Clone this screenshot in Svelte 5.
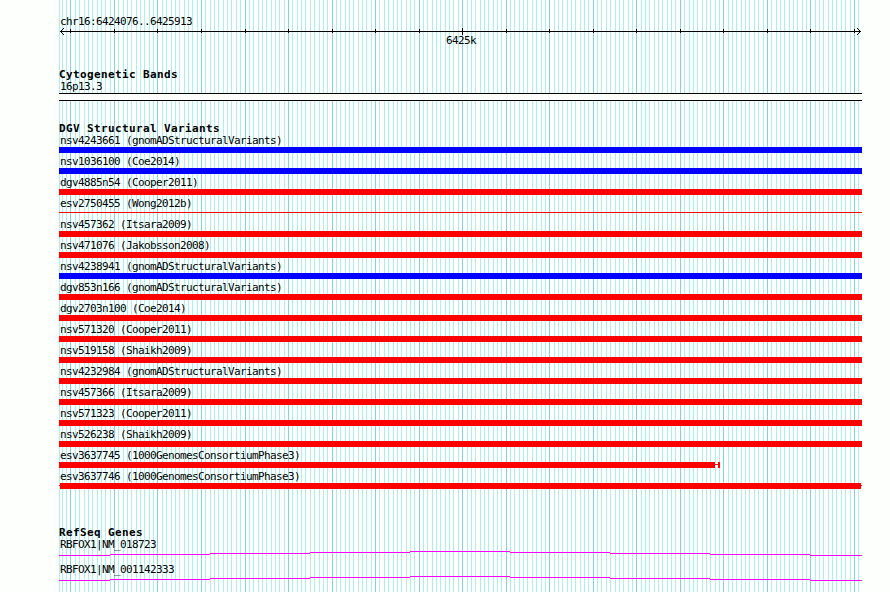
<script lang="ts">
	const start = 6424076;
	const end = 6425913;
	const scale = 800 / (end - start + 1);

	function toX(base: number): number {
		return Math.round(1 + (base - start) * scale);
	}

	const lines = [{ base: start, x: 0, major: false }];
	for (let base = 6424080; base < end; base += 10) {
		lines.push({ base, x: toX(base), major: base % 100 === 0 });
	}
	const ticks = lines.filter((line) => line.major);

	const variants = [
		{ id: 'nsv4243661', study: 'gnomADStructuralVariants', kind: 'loss-gain' },
		{ id: 'nsv1036100', study: 'Coe2014', kind: 'loss-gain' },
		{ id: 'dgv4885n54', study: 'Cooper2011', kind: 'loss' },
		{ id: 'esv2750455', study: 'Wong2012b', kind: 'thin' },
		{ id: 'nsv457362', study: 'Itsara2009', kind: 'loss' },
		{ id: 'nsv471076', study: 'Jakobsson2008', kind: 'loss' },
		{ id: 'nsv4238941', study: 'gnomADStructuralVariants', kind: 'loss-gain' },
		{ id: 'dgv853n166', study: 'gnomADStructuralVariants', kind: 'loss' },
		{ id: 'dgv2703n100', study: 'Coe2014', kind: 'loss' },
		{ id: 'nsv571320', study: 'Cooper2011', kind: 'loss' },
		{ id: 'nsv519158', study: 'Shaikh2009', kind: 'loss' },
		{ id: 'nsv4232984', study: 'gnomADStructuralVariants', kind: 'loss' },
		{ id: 'nsv457366', study: 'Itsara2009', kind: 'loss' },
		{ id: 'nsv571323', study: 'Cooper2011', kind: 'loss' },
		{ id: 'nsv526238', study: 'Shaikh2009', kind: 'loss' },
		{ id: 'esv3637745', study: '1000GenomesConsortiumPhase3', kind: 'ends-inside' },
		{ id: 'esv3637746', study: '1000GenomesConsortiumPhase3', kind: 'whole' }
	];

	const genes = ['RBFOX1|NM_018723', 'RBFOX1|NM_001142333'];

	// the intron line rises to the middle of the panel, one pixel per step
	const intron = [
		[0, 51, 5],
		[51, 151, 4],
		[151, 251, 3],
		[251, 351, 2],
		[351, 451, 1],
		[451, 551, 2],
		[551, 651, 3],
		[651, 751, 4],
		[751, 803, 5]
	];
</script>

<main class="panel">
	<svg class="grid" width="803" height="592" aria-hidden="true">
		{#each lines as line}
			<rect class:major={line.major} x={line.x} y="0" width="1" height="592" />
		{/each}
	</svg>

	<div class="tracks">
		<header class="ruler">
			<div class="label">chr16:6424076..6425913</div>
			<svg class="scale" width="803" height="9" aria-hidden="true">
				<rect x="1" y="4" width="801" height="1" />
				{#each ticks as tick}
					{#if tick.base % 1000 === 0}
						<rect x={tick.x} y="1" width="1" height="7" />
					{:else}
						<rect x={tick.x} y="2" width="1" height="4" />
					{/if}
				{/each}
				<path d="M4 1h1v1H4zM3 2h1v1H3zM2 3h1v1H2zM2 5h1v1H2zM3 6h1v1H3zM4 7h1v1H4z" />
				<path d="M798 1h1v1h-1zM799 2h1v1h-1zM800 3h1v1h-1zM800 5h1v1h-1zM799 6h1v1h-1zM798 7h1v1h-1z" />
			</svg>
			<div class="label center">6425k</div>
		</header>

		<section class="cytobands">
			<h2>Cytogenetic Bands</h2>
			<div class="label">16p13.3</div>
			<div class="band"></div>
		</section>

		<section class="variants">
			<h2>DGV Structural Variants</h2>
			{#each variants as variant}
				<div class="variant">
					<div class="label">{variant.id} ({variant.study})</div>
					<div class="bar {variant.kind}"></div>
				</div>
			{/each}
		</section>

		<section class="genes">
			<h2>RefSeq Genes</h2>
			{#each genes as gene}
				<div class="gene">
					<div class="label">{gene}</div>
					<svg width="803" height="8" aria-hidden="true">
						{#each intron as [from, to, y]}
							<rect x={from} {y} width={to - from} height="1" />
						{/each}
					</svg>
				</div>
			{/each}
		</section>
	</div>
</main>

<style>
	:global(body) {
		background: #fcfffc;
	}

	.panel {
		display: grid;
		width: 803px;
		height: 592px;
		margin-left: 59px;
		overflow: hidden;
		color: #000;
		font-family: 'DejaVu Sans Mono', monospace;
		font-size: 11px;
	}

	.grid,
	.tracks {
		grid-area: 1 / 1;
	}

	svg {
		display: block;
		shape-rendering: crispEdges;
	}

	.grid {
		fill: #afeeee;
	}

	.grid .major {
		fill: #87ceeb;
	}

	.tracks {
		z-index: 1;
		min-width: 0;
	}

	.label {
		height: 12px;
		padding-left: 1px;
		letter-spacing: -0.622px;
		line-height: 14px;
		white-space: pre;
	}

	h2 {
		height: 12px;
		margin: 0;
		font-size: 11px;
		font-weight: 700;
		letter-spacing: 0.378px;
		line-height: 14px;
	}

	.ruler {
		height: 68px;
		padding-top: 15px;
		box-sizing: border-box;
	}

	.center {
		padding-left: 387px;
		margin-top: -2px;
	}

	.cytobands {
		height: 54px;
	}

	.band {
		height: 6px;
		margin-top: 1px;
		border-top: 1px solid #000;
		border-bottom: 1px solid #000;
		background: #fcfffc;
	}

	.variants {
		height: 404px;
	}

	.variant {
		height: 21px;
	}

	.bar {
		height: 6px;
		margin-top: 1px;
		background: #f00;
	}

	.bar.loss-gain {
		background: #00f;
	}

	.bar.thin {
		height: 1px;
		margin-top: 3px;
	}

	/* the feature stops short of the panel edge with a small capped whisker */
	.bar.ends-inside {
		width: 661px;
		background:
			linear-gradient(#f00, #f00) 0 0 / 656px 6px no-repeat,
			linear-gradient(#f00, #f00) 656px 2px / 3px 1px no-repeat,
			linear-gradient(#f00, #f00) 659px 0 / 2px 6px no-repeat;
	}

	.bar.whole {
		background:
			linear-gradient(#f00, #f00) 1px 0 / 801px 6px no-repeat,
			linear-gradient(#f00, #f00) 0 2px / 803px 1px no-repeat;
	}

	.gene {
		height: 25px;
	}

	.gene svg {
		fill: #f0f;
	}
</style>
